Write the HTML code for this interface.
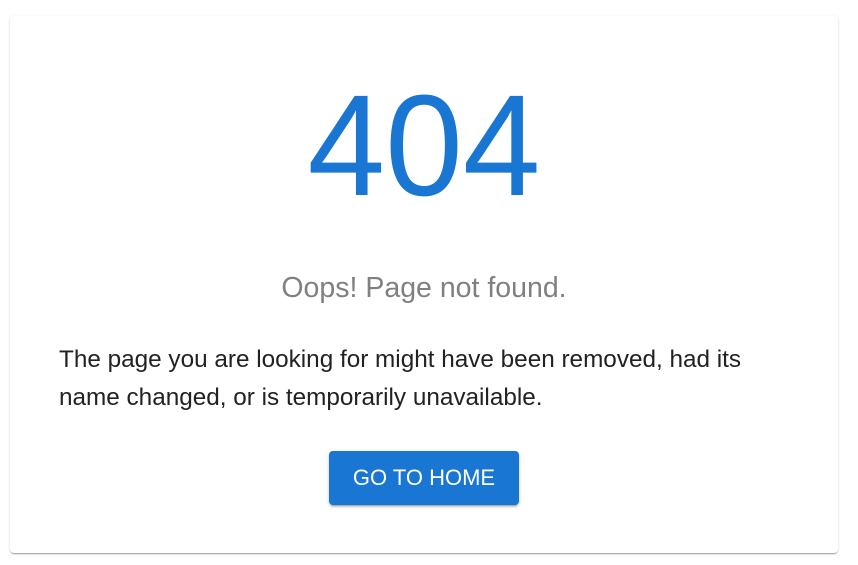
<!DOCTYPE html>
<html><head><style>
html,body{margin:0;padding:0;background:#fff;width:858px;height:565px;overflow:hidden;font-family:"Liberation Sans",Arial,sans-serif}
.card{position:absolute;left:10px;top:16px;width:828px;height:537px;background:#fff;border-radius:4px;box-shadow:0 2px 1px -1px rgba(0,0,0,.2),0 1px 1px 0 rgba(0,0,0,.14),0 1px 3px 0 rgba(0,0,0,.12)}
.n{position:absolute;left:0;width:848px;top:69px;text-align:center;font-size:144px;line-height:154px;color:#1976d2;transform:scaleX(0.97);transform-origin:424px 0}
.o{position:absolute;left:0;width:848px;top:271px;text-align:center;font-size:28.5px;line-height:34px;color:#808080}
.p{position:absolute;left:59px;top:341px;width:740px;font-size:24.3px;line-height:37.5px;color:#222}
.b{position:absolute;left:329px;top:451px;width:190px;height:54px;background:#1976d2;border-radius:4px;color:#fff;font-size:22px;line-height:54px;text-align:center;box-shadow:0 3px 1px -2px rgba(0,0,0,.2),0 2px 2px 0 rgba(0,0,0,.14),0 1px 5px 0 rgba(0,0,0,.12)}
</style></head><body>
<div class="card"></div>
<div class="n">404</div>
<div class="o">Oops! Page not found.</div>
<div class="p">The page you are looking for might have been removed, had its name changed, or is temporarily unavailable.</div>
<div class="b">GO TO HOME</div>
</body></html>
